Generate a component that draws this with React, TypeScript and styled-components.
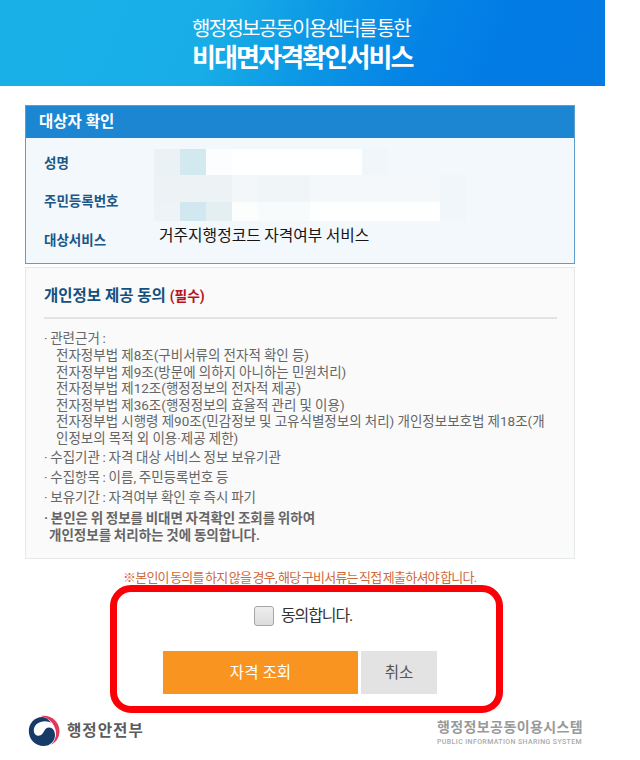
import React from "react";
import styled, { createGlobalStyle } from "styled-components";

const Global = createGlobalStyle`
  * { box-sizing: border-box; }
  body { margin: 0; background: #fff; font-family: Roboto, "Noto Sans CJK KR", sans-serif; }
`;

const Page = styled.main`
  width: 640px;
  height: 760px;
  overflow: hidden;
  background: #fff;
`;

const Hero = styled.header`
  width: 605px;
  height: 86px;
  padding-top: 16px;
  padding-left: 192px;
  color: #fff;
  background: linear-gradient(112deg, #19b0e7 0%, #18ade7 36%, #0d9ae5 50%, #0584e5 68%, #027be5 82%, #047be3 100%);
`;

const Text = styled.div<{ $size: number; $gap?: number; $word?: number; $line: number; $weight?: number; $color?: string; $indent?: number }>`
  font-size: ${(p) => p.$size}px;
  letter-spacing: ${(p) => p.$gap ?? 0}px;
  word-spacing: ${(p) => p.$word ?? 0}px;
  line-height: ${(p) => p.$line}px;
  font-weight: ${(p) => p.$weight ?? 400};
  color: ${(p) => p.$color ?? "inherit"};
  padding-left: ${(p) => p.$indent ?? 0}px;
  white-space: nowrap;
`;

const Content = styled.div`
  width: 550px;
  margin: 19px 0 0 25px;
`;

const Target = styled.section`
  height: 159px;
  border: 1px solid #5b9fca;
  background: #f2f8fb;
`;

const TargetHead = styled.h2`
  margin: 0;
  height: 32px;
  padding-left: 13px;
  background: #1d86d3;
  color: #fff;
  font-size: 15.5px;
  font-weight: 700;
  line-height: 32px;
`;

const TargetBody = styled.div`
  display: flex;
`;

const Labels = styled.div`
  width: 128px;
  padding: 6px 0 0 18px;
`;

const Values = styled.div`
  padding-top: 11px;
`;

const MosaicRow = styled.div<{ $h: number }>`
  display: flex;
  height: ${(p) => p.$h}px;
`;

const Cell = styled.span<{ $w: number; $c: string }>`
  width: ${(p) => p.$w}px;
  background: ${(p) => p.$c};
`;

const Consent = styled.section`
  height: 292px;
  margin-top: 3px;
  padding: 16px 17px 0 18px;
  border: 1px solid #e6e9e9;
  background: #fafafa;
  color: #666;
`;

const ConsentHead = styled.div`
  display: flex;
  align-items: baseline;
  height: 35px;
  border-bottom: 2px solid #e3e3e3;
  margin-bottom: 11px;
`;

const Items = styled.div`
  padding-top: 1px;
`;

const Notice = styled.div`
  height: 26px;
  padding: 10px 0 0 98px;
`;

const Highlight = styled.section`
  width: 393px;
  height: 128px;
  margin-left: 85px;
  border: 7px solid #fb0007;
  border-radius: 21px;
`;

const Agree = styled.label`
  display: flex;
  align-items: center;
  gap: 7px;
  margin: 12px 0 0 137px;
`;

const Box = styled.span`
  width: 20px;
  height: 20px;
  border: 1px solid #a6a6a6;
  border-radius: 3px;
  background: linear-gradient(#eee, #dcdcdc);
`;

const Actions = styled.div`
  display: flex;
  gap: 3px;
  margin: 23px 0 0 46px;
`;

const Button = styled.button<{ $primary?: boolean }>`
  width: ${(p) => (p.$primary ? 195 : 76)}px;
  height: 43px;
  padding: 0 0 3px;
  border: 0;
  font-family: inherit;
  font-size: 15.6px;
  background: ${(p) => (p.$primary ? "#f8941f" : "#e3e3e3")};
  color: ${(p) => (p.$primary ? "#fff" : "#555")};
`;

const Footer = styled.footer`
  display: flex;
  padding: 3px 0 0 28px;
`;

const Ministry = styled.div`
  display: flex;
  width: 409px;
  gap: 7px;
`;

const EmblemSvg = styled.svg`
  margin-top: -1px;
`;

function Emblem() {
  return (
    <EmblemSvg width="32" height="32" viewBox="0 0 32 32">
      <path d="M12.500 1C23-.8 31.500 6.500 31.500 16C31.500 22.500 28 27.500 23 29.800C27 26 28.800 21 27.800 15.800C26.300 8 20 2.500 12.500 1Z" fill="#e0395a" />
      <path d="M15 2C6.500 1.600.8 8.500.8 16C.8 24.500 7.500 31 15.500 31C22.500 31 27 26 27 20C27 15.500 24.500 12.500 21 12.500C16 12.500 16.500 18.500 12.500 20.300C9 21.800 5.800 19.300 5.800 15.500C5.800 10 11 6.300 17 6.300C19.500 6.300 21.500 7 23 8C21 4.800 18.500 2.700 15 2Z" fill="#173b67" />
    </EmblemSvg>
  );
}

const laws = [
  "전자정부법 제8조(구비서류의 전자적 확인 등)",
  "전자정부법 제9조(방문에 의하지 아니하는 민원처리)",
  "전자정부법 제12조(행정정보의 전자적 제공)",
  "전자정부법 제36조(행정정보의 효율적 관리 및 이용)",
  "전자정부법 시행령 제90조(민감정보 및 고유식별정보의 처리) 개인정보보호법 제18조(개",
  "인정보의 목적 외 이용·제공 제한)",
];

const items = [
  "· 수집기관 : 자격 대상 서비스 정보 보유기관",
  "· 수집항목 : 이름, 주민등록번호 등",
  "· 보유기간 : 자격여부 확인 후 즉시 파기",
];

const mosaic = [
  { h: 26, cells: [[26, "#eaf2f5"], [26, "#d3e9f0"], [26, "#fbfdfe"], [130, "#feffff"], [26, "#f0f6fa"]] },
  { h: 27, cells: [[78, "#edf3f5"], [26, "#f3f7fa"], [52, "#f0f5f7"], [130, "#f5f8fb"], [26, "#f0f6f9"]] },
  { h: 19, cells: [[26, "#edf3f6"], [26, "#d1e8f1"], [26, "#e3eff1"], [26, "#fcfefe"], [52, "#f8fbfc"], [130, "#feffff"], [26, "#f0f6f9"]] },
] as { h: number; cells: [number, string][] }[];

export default function App() {
  return (
    <Page>
      <Global />
      <Hero>
        <Text $size={20} $gap={-1.7} $word={-2.3} $line={26}>행정정보공동이용센터를 통한</Text>
        <Text $size={26} $gap={-1.9} $word={-4.4} $line={32} $weight={700}>비대면 자격확인 서비스</Text>
      </Hero>
      <Content>
        <Target>
          <TargetHead>대상자 확인</TargetHead>
          <TargetBody>
            <Labels>
              {["성명", "주민등록번호", "대상서비스"].map((t) => (
                <Text key={t} $size={13.5} $line={38.3} $weight={700} $color="#1b5788">{t}</Text>
              ))}
            </Labels>
            <Values>
              {mosaic.map((row, i) => (
                <MosaicRow key={i} $h={row.h}>
                  {row.cells.map(([w, c], j) => <Cell key={j} $w={w} $c={c} />)}
                </MosaicRow>
              ))}
              <Text $size={15.8} $word={-0.5} $line={30} $indent={5} $color="#151515">거주지행정코드 자격여부 서비스</Text>
            </Values>
          </TargetBody>
        </Target>
        <Consent>
          <ConsentHead>
            <Text $size={15.5} $line={24} $weight={700} $color="#12507f">개인정보 제공 동의&nbsp;</Text>
            <Text $size={13.8} $line={24} $weight={700} $color="#b7111c">(필수)</Text>
          </ConsentHead>
          <Text $size={13.5} $word={-0.7} $line={17}>· 관련근거 :</Text>
          {laws.map((t) => <Text key={t} $size={13.5} $word={-0.2} $line={16.5} $indent={12}>{t}</Text>)}
          <Items>
            {items.map((t) => <Text key={t} $size={13.5} $word={-0.65} $line={20.2}>{t}</Text>)}
            <Text $size={13.5} $word={-0.7} $line={20} $weight={700}>· 본인은 위 정보를 비대면 자격확인 조회를 위하여</Text>
            <Text $size={13.5} $word={-0.6} $line={15} $weight={700} $indent={5}>개인정보를 처리하는 것에 동의합니다.</Text>
          </Items>
        </Consent>
        <Notice>
          <Text $size={13} $gap={-0.77} $word={-1.1} $line={18} $color="#cf6a3b">※본인이 동의를 하지 않을 경우, 해당 구비서류는 직접 제출하셔야 합니다.</Text>
        </Notice>
        <Highlight>
          <Agree>
            <Box />
            <Text $size={16} $gap={-1.1} $line={24} $color="#333">동의합니다.</Text>
          </Agree>
          <Actions>
            <Button $primary>자격 조회</Button>
            <Button>취소</Button>
          </Actions>
        </Highlight>
      </Content>
      <Footer>
        <Ministry>
          <Emblem />
          <Text $size={15.6} $gap={1} $line={31} $weight={700} $color="#5c5c5c">행정안전부</Text>
        </Ministry>
        <div>
          <Text $size={14} $gap={0.4} $line={22} $weight={700} $color="#999">행정정보공동이용시스템</Text>
          <Text $size={7} $gap={0.38} $line={9} $weight={500} $color="#aaa">PUBLIC INFORMATION SHARING SYSTEM</Text>
        </div>
      </Footer>
    </Page>
  );
}
